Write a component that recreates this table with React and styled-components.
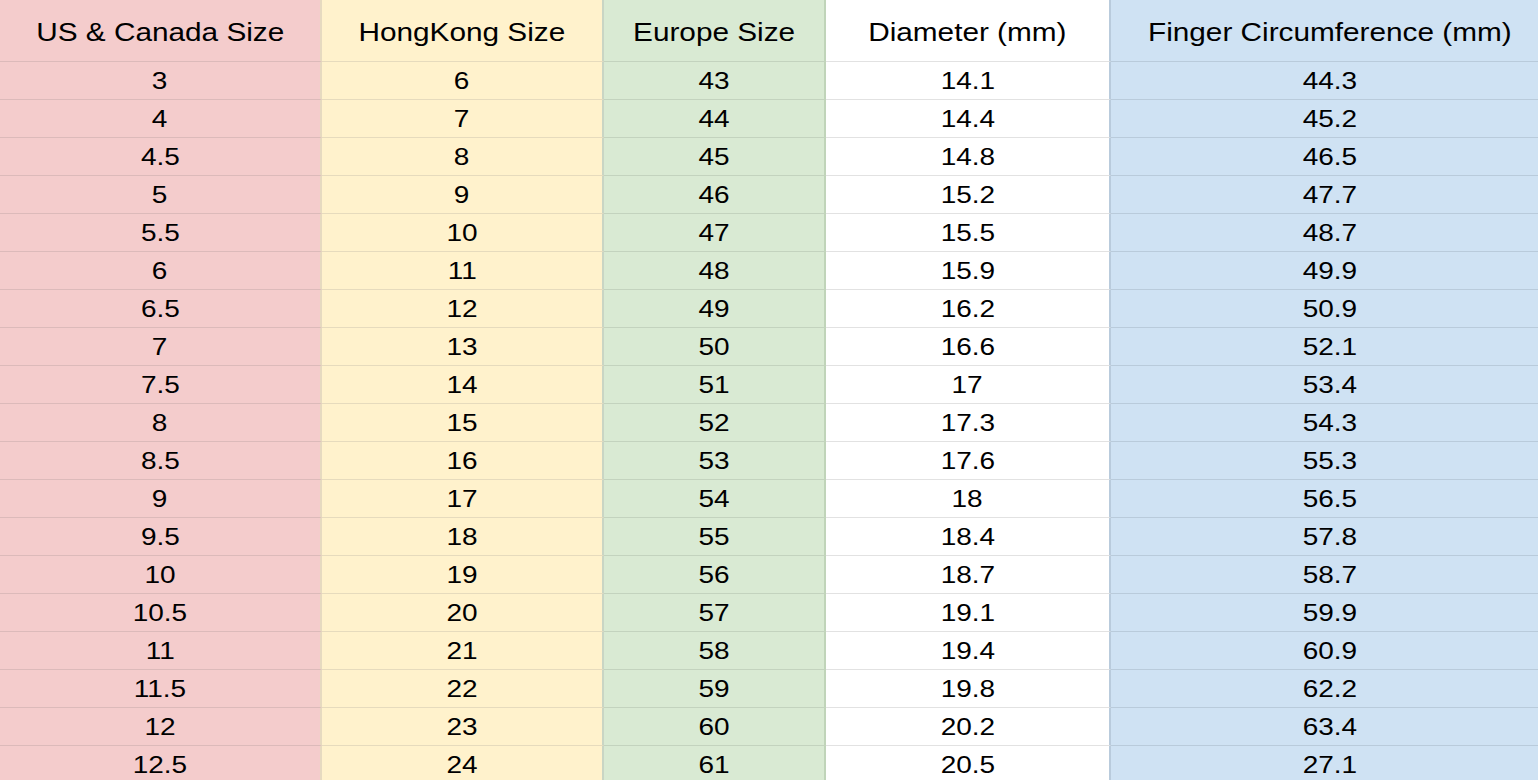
import React from "react";
import styled, { createGlobalStyle } from "styled-components";

const GlobalStyle = createGlobalStyle`
  html, body {
    margin: 0;
    padding: 0;
    background: #fff;
    overflow: hidden;
  }
  body {
    font-family: "Liberation Sans", Arial, sans-serif;
    color: #000;
  }
`;

const COLUMNS = [
  { title: "US & Canada Size", bg: "#f4cccc", line: "#dcbaba", divider: "#e6dac0" },
  { title: "HongKong Size", bg: "#fff2cc", line: "#e6dbbd", divider: "#c9d5c4" },
  { title: "Europe Size", bg: "#d9ead3", line: "#c3d3be", divider: "#c0d4b9" },
  { title: "Diameter (mm)", bg: "#ffffff", line: "#e2e2e2", divider: "#b9cbdc" },
  { title: "Finger Circumference (mm)", bg: "#cfe2f3", line: "#b9cbdb", divider: null }
];

const ROWS = [
  ["3", "6", "43", "14.1", "44.3"],
  ["4", "7", "44", "14.4", "45.2"],
  ["4.5", "8", "45", "14.8", "46.5"],
  ["5", "9", "46", "15.2", "47.7"],
  ["5.5", "10", "47", "15.5", "48.7"],
  ["6", "11", "48", "15.9", "49.9"],
  ["6.5", "12", "49", "16.2", "50.9"],
  ["7", "13", "50", "16.6", "52.1"],
  ["7.5", "14", "51", "17", "53.4"],
  ["8", "15", "52", "17.3", "54.3"],
  ["8.5", "16", "53", "17.6", "55.3"],
  ["9", "17", "54", "18", "56.5"],
  ["9.5", "18", "55", "18.4", "57.8"],
  ["10", "19", "56", "18.7", "58.7"],
  ["10.5", "20", "57", "19.1", "59.9"],
  ["11", "21", "58", "19.4", "60.9"],
  ["11.5", "22", "59", "19.8", "62.2"],
  ["12", "23", "60", "20.2", "63.4"],
  ["12.5", "24", "61", "20.5", "27.1"]
];

// the last column runs past the right edge of the window, as in the sheet
const Sheet = styled.div`
  width: 1538px;
  height: 780px;
  overflow: hidden;
`;

const Row = styled.div`
  display: grid;
  grid-template-columns: 322px 282px 222px 285px 438px;
  width: 1549px;
  height: ${p => (p.$head ? 62 : 38)}px;
`;

const Cell = styled.div`
  box-sizing: border-box;
  display: flex;
  align-items: center;
  justify-content: center;
  background: ${p => p.$bg};
  border-bottom: 1px solid ${p => p.$line};
  border-right: ${p => (p.$divider ? `2px solid ${p.$divider}` : "none")};
  font-size: ${p => (p.$head ? 25 : 23.5)}px;
  padding-top: ${p => (p.$head ? 4 : 1)}px;
  overflow: hidden;
  white-space: nowrap;
`;

// the sheet text is drawn a little wider than plain Arial
const Text = styled.span`
  display: inline-block;
  transform: scaleX(1.19);
  transform-origin: center;
`;

export default function App() {
  return (
    <>
      <GlobalStyle />
      <Sheet>
        <Row $head>
          {COLUMNS.map(col => (
            <Cell
              key={col.title}
              $head
              $bg={col.bg}
              $line={col.line}
              $divider={col.divider}
            >
              <Text>{col.title}</Text>
            </Cell>
          ))}
        </Row>
        {ROWS.map((row, i) => (
          <Row key={i}>
            {row.map((value, j) => (
              <Cell
                key={j}
                $bg={COLUMNS[j].bg}
                $line={COLUMNS[j].line}
                $divider={COLUMNS[j].divider}
              >
                <Text>{value}</Text>
              </Cell>
            ))}
          </Row>
        ))}
      </Sheet>
    </>
  );
}
